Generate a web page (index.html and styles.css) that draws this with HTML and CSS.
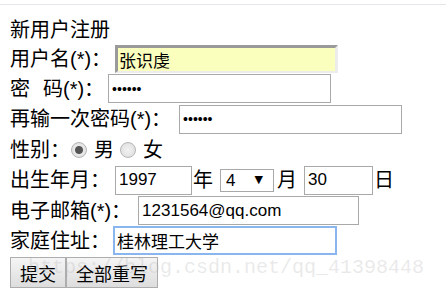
FILE: index.html
```html
<!doctype html>
<html lang="zh-CN">
<head>
    <meta charset="UTF-8">
    <meta name="viewport" content="width=device-width, initial-scale=1.0">
    <title>新用户注册</title>
    <link rel="stylesheet" href="styles.css">
</head>
<body>
    <div class="topline"></div>
    <form action="" class="reg">
        <div class="reg__row reg__title">新用户注册</div>
        <div class="reg__row">
            <label class="reg__label">用户名(*)：</label>
            <input type="text" class="reg__field reg__field--autofill" value="张识虔">
        </div>
        <div class="reg__row">
            <label class="reg__label">密<span class="reg__gap"></span>码(*)：</label>
            <input type="password" class="reg__field reg__field--pwd" value="123456">
        </div>
        <div class="reg__row">
            <label class="reg__label">再输一次密码(*)：</label>
            <input type="password" class="reg__field reg__field--again" value="123456">
        </div>
        <div class="reg__row">
            <label class="reg__label">性别：</label>
            <label class="reg__radio"><input type="radio" name="sex" checked>男</label>
            <label class="reg__radio"><input type="radio" name="sex">女</label>
        </div>
        <div class="reg__row">
            <label class="reg__label">出生年月：</label>
            <input type="text" class="reg__field reg__field--year" value="1997">
            <span class="reg__unit">年</span>
            <span class="reg__select">
                <select>
                    <option>4</option>
                </select>
            </span>
            <span class="reg__unit">月</span>
            <input type="text" class="reg__field reg__field--day" value="30">
            <span class="reg__unit">日</span>
        </div>
        <div class="reg__row">
            <label class="reg__label">电子邮箱(*)：</label>
            <input type="text" class="reg__field reg__field--mail" value="1231564@qq.com">
        </div>
        <div class="reg__row">
            <label class="reg__label">家庭住址：</label>
            <input type="text" class="reg__field reg__field--focus" value="桂林理工大学" autofocus>
        </div>
        <div class="reg__row reg__buttons">
            <button type="submit">提交</button>
            <button type="reset">全部重写</button>
        </div>
    </form>
    <div class="watermark">https://blog.csdn.net/qq_41398448</div>
</body>
</html>
```
FILE: styles.css
```css
*, ::before, ::after {
    padding: 0;
    margin: 0;
    box-sizing: border-box;
}
body {
    font-family: 'Liberation Sans', 'Noto Sans CJK SC', sans-serif;
    font-size: 20px;
    color: #000000;
    background: #ffffff;
    position: relative;
    height: 290px;
    overflow: hidden;
}
.topline {
    height: 5px;
    border-bottom: 1px solid #e4e6e9;
}
.reg {
    padding: 8px 0 0 10px;
}
.reg__row {
    height: 30.4px;
    display: flex;
    flex-direction: row;
    align-items: center;
    line-height: 1;
    white-space: nowrap;
}
.reg__title {
    padding-top: 4px;
}
.reg__gap {
    display: inline-block;
    width: 13px;
}
.reg__field {
    height: 29px;
    width: 223px;
    margin-left: 4px;
    padding: 0 3px;
    border: 1px solid #a9a9a9;
    outline: none;
    font-family: 'Liberation Sans', 'Noto Sans CJK SC', sans-serif;
    font-size: 17px;
    color: #000000;
    background: #ffffff;
}
.reg__field--autofill {
    height: 28px;
    border-width: 3px 3px 2px 3px;
    border-color: #9a9a9a #ececec #ececec #9a9a9a;
    background: #faffbd;
    padding-left: 1px;
}
.reg__field--pwd {
    font-size: 14px;
    letter-spacing: 0;
}
.reg__field--again {
    font-size: 14px;
    letter-spacing: 0;
    margin-left: 8px;
}
.reg__field--year {
    width: 77px;
    margin-left: 5px;
}
.reg__field--day {
    width: 69px;
    margin-left: 7px;
}
.reg__field--mail {
    width: 221px;
    margin-left: 7px;
}
.reg__field--focus {
    width: 224px;
    margin-left: 3px;
    border: 2px solid #8ab6ef;
    padding-left: 2px;
    caret-color: #000000;
}
.reg__unit {
    margin-left: 1px;
}
.reg__radio {
    display: flex;
    align-items: center;
}
.reg__radio:first-of-type {
    margin-left: 7px;
}
.reg__radio input {
    appearance: none;
    -webkit-appearance: none;
    width: 16px;
    height: 16px;
    border-radius: 50%;
    border: 1px solid #b5b5b5;
    background: radial-gradient(circle, #f2f2f2 0%, #dcdcdc 100%);
    margin: 0 7px 0 1px;
}
.reg__radio input:checked {
    background: radial-gradient(circle, #555555 0, #555555 3.5px, #e9e9e9 4.5px, #dcdcdc 100%);
}
.reg__radio + .reg__radio input {
    margin-left: 6px;
}
.reg__select {
    position: relative;
    margin-left: 7px;
    margin-right: 2px;
}
.reg__select select {
    appearance: none;
    -webkit-appearance: none;
    width: 54px;
    height: 23px;
    border: 1px solid #a9a9a9;
    background: #ffffff;
    padding: 0 0 0 5px;
    font-family: 'Liberation Sans', sans-serif;
    font-size: 17px;
    color: #000000;
    outline: none;
}
.reg__select::after {
    content: '\25BC';
    position: absolute;
    right: 11px;
    top: 5px;
    font-family: 'DejaVu Sans', sans-serif;
    font-size: 11px;
    color: #000000;
    pointer-events: none;
}
.reg__buttons {
    height: 31px;
    margin-top: 1px;
}
.reg__buttons button {
    height: 31px;
    padding: 0 9px;
    border: 1px solid #adadad;
    background: linear-gradient(#f5f5f5, #dddddd);
    font-family: 'Noto Sans CJK SC', sans-serif;
    font-size: 18px;
    color: #000000;
    line-height: 1;
}
.watermark {
    position: absolute;
    left: 28px;
    top: 256px;
    font-family: 'Liberation Mono', monospace;
    font-size: 20px;
    color: rgba(170, 170, 170, 0.25);
    pointer-events: none;
}
```
